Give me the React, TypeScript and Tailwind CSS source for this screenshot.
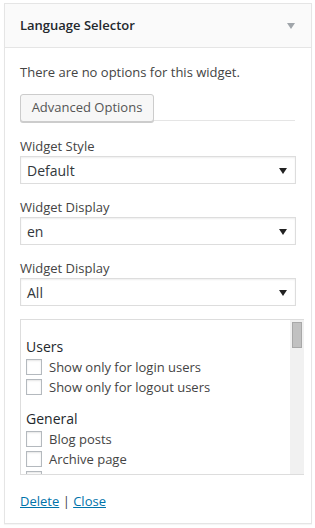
import React from 'react';

const font = { fontFamily: '"Open Sans", "Noto Sans", sans-serif' };

function Select({ value }: { value: string }) {
    return (
        <div className="flex items-center justify-between w-[276px] h-[28px] border border-[#ddd] bg-white shadow-[inset_0_1px_2px_rgba(0,0,0,0.07)] pl-[6px] pr-[8px] text-[14px] text-[#32373c]">
            <span>{value}</span>
            <svg width="8" height="6" viewBox="0 0 8 6" className="mt-px">
                <polygon points="0,0 8,0 4,6" fill="#222" />
            </svg>
        </div>
    );
}

function Check({ label }: { label: string }) {
    return (
        <div className="flex items-center h-[20px] gap-[7px]">
            <div className="w-[16px] h-[16px] border border-[#b4b9be] bg-white shadow-[inset_0_1px_2px_rgba(0,0,0,0.1)] shrink-0" />
            <span className="text-[13px] text-[#444] leading-none">{label}</span>
        </div>
    );
}

export default function App() {
    return (
        <div className="w-[315px] h-[528px] bg-white pt-[3px] pl-[4px]" style={font}>
            <div className="w-[308px] h-[521px] border border-[#e5e5e5] shadow-[0_1px_1px_rgba(0,0,0,0.04)] flex flex-col">
                {/* Header */}
                <div className="h-[44px] bg-[#fafafa] border-b border-[#e5e5e5] flex items-center justify-between pl-[15px] pr-[16px]">
                    <h3 className="text-[13px] font-semibold text-[#23282d] mt-px">Language Selector</h3>
                    <svg width="8" height="6" viewBox="0 0 8 6">
                        <polygon points="0,0 8,0 4,6" fill="#a0a5aa" />
                    </svg>
                </div>

                {/* Body */}
                <div className="pl-[15px] pt-[15px]">
                    <p className="text-[13px] text-[#444] leading-[18px]">There are no options for this widget.</p>
                    <div className="flex items-end mt-[13px]">
                        <button className="h-[28px] w-[134px] bg-[#f7f7f7] border border-[#ccc] rounded-[3px] shadow-[0_1px_0_#ccc] text-[13px] text-[#555] shrink-0">
                            Advanced Options
                        </button>
                        <div className="w-[141px] border-b border-[#e5e5e5] mb-px" />
                    </div>

                    <div className="mt-[15px] text-[13px] text-[#444] leading-[18px] mb-px">Widget Style</div>
                    <Select value="Default" />

                    <div className="mt-[14px] text-[13px] text-[#444] leading-[18px] mb-px">Widget Display</div>
                    <Select value="en" />

                    <div className="mt-[14px] text-[13px] text-[#444] leading-[18px] mb-px">Widget Display</div>
                    <Select value="All" />

                    {/* Checkbox list */}
                    <div className="mt-[13px] w-[284px] h-[156px] border border-[#ddd] border-r-0 flex overflow-hidden">
                        <div className="flex-1 pl-[5px] pt-[18px]">
                            <h4 className="text-[14px] text-[#23282d] leading-[18px] mb-px">Users</h4>
                            <Check label="Show only for login users" />
                            <Check label="Show only for logout users" />
                            <h4 className="text-[14px] text-[#23282d] leading-[18px] mt-[13px] mb-px">General</h4>
                            <Check label="Blog posts" />
                            <Check label="Archive page" />
                            <Check label="Search results" />
                        </div>
                        <div className="w-[14px] bg-[#f1f1f1] pt-[2px] flex justify-center">
                            <div className="w-[10px] h-[26px] bg-[#c1c1c1] border border-[#a8a8a8]" />
                        </div>
                    </div>

                    <div className="mt-[17px] text-[13px] leading-[18px] text-[#444]">
                        <a href="#" className="text-[#0073aa] underline">Delete</a>
                        <span> | </span>
                        <a href="#" className="text-[#0073aa] underline">Close</a>
                    </div>
                </div>
            </div>
        </div>
    );
}
